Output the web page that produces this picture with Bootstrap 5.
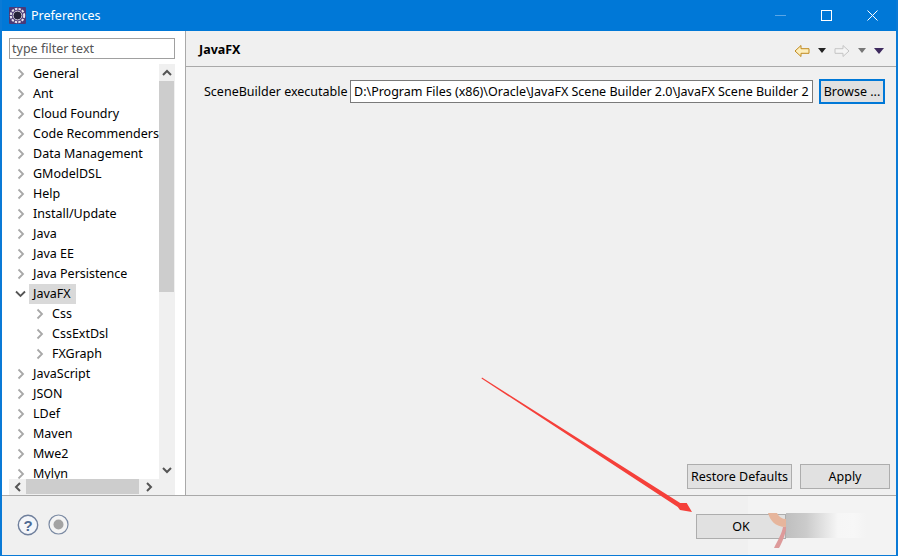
<!DOCTYPE html>
<html lang="en"><head><meta charset="utf-8"><title>Preferences</title>
<link rel="stylesheet" href="https://cdn.jsdelivr.net/npm/bootstrap@5.3.0/dist/css/bootstrap.min.css">
<style>
html,body{height:100%;overflow:hidden}
body{font-family:"Noto Sans","Liberation Sans",sans-serif;font-size:12.5px;color:#000;background:#fff}
.winframe{width:898px;height:556px;border:solid #0a7ad6;border-width:0 2px 1px 2px;position:relative;overflow:hidden;background:#f0f0f0}
.titlebar{height:31px;background:#0078d7;color:#fff;flex:none;margin:0 -2px}
.titlebar .ttl{font-size:12.5px;margin-left:5px;padding-top:1px}
.appicon{margin-left:9px}
.winctl{margin-right:3px}
.winbtn{width:46px;height:31px}
.sidepane{width:184px;flex:none;background:#fff;border-right:1px solid #a9a9a9;padding:7px 10px 0 7px;height:464px}
.filterbox{height:21px;border:1px solid #a0a0a0;border-radius:0;padding:0 2px;font-size:12.5px;color:#555;line-height:19px;flex:none;margin-bottom:5px;background:#fff}
.treewrap{height:415px;flex:none}
.treelist{overflow:hidden;margin:0;padding:0;list-style:none;background:#fff;height:415px}
.treeitem{height:20px;line-height:19px;white-space:nowrap;display:flex;align-items:center;flex:none}
.treeitem svg{width:8px;height:12px;margin:0 8px 0 8px;flex:none}
.treeitem.lvl2{padding-left:19px}
.treeitem span{padding:0 3px;margin-left:-3px;line-height:20px}
.treeitem.picked span{background:#d9d9d9;padding:0 5px 0 4px;margin-left:-4px}
.vbar{width:16px;background:#f0f0f0;flex:none}
.vbar .thumb{height:211px;background:#cdcdcd;width:15px}
.barbtn{height:17px;flex:none}
.hbar{height:16px;background:#f0f0f0;width:166px}
.hbar .thumb{width:113px;height:15px;background:#cdcdcd}
.hcap{width:17px;flex:none}
.hcap2{width:20px;flex:none}
.mainpane{background:#f0f0f0;height:464px;padding:0 0 0 13px}
.panehead{height:36px;border-bottom:1px solid #a9a9a9;margin:0 0 0 -13px;padding:4px 12px 0 13px;flex:none}
.panehead b{font-weight:700;font-size:12.5px}
.fieldrow{margin-top:12px;padding-left:5px}
.fieldlabel{width:146px;flex:none;white-space:nowrap;padding-top:2px}
.pathbox{width:463px;height:23px;border:1px solid #7a7a7a;border-radius:0;padding:0 3px;font-size:12.5px;line-height:21px;flex:none;overflow:hidden;white-space:nowrap;background:#fff;color:#000}
.swtbtn{background:#e1e1e1;border:1px solid #adadad;border-radius:0;color:#000;font-size:12.5px;padding:0;height:25px;line-height:22px;box-shadow:none}
.swtbtn.browse{width:66px;height:25px;border:2px solid #0078d7;margin-left:6px;line-height:20px}
.swtbtn.restore{width:105px}
.swtbtn.apply{width:90px;margin-left:8px}
.actions{margin-right:6px;margin-bottom:6px}
.bottombar{height:60px;background:linear-gradient(90deg,#f0f0f0 746px,#f3f3f3 746px);border-top:1px solid #a9a9a9;flex:none;padding:0 0 2px 15px}
.bottombar .ok{width:90px;margin-left:auto;margin-right:110px;margin-top:4px}
.stopicon{margin-left:9px}
.smudge{position:absolute;left:784px;top:513px;width:80px;height:25px;background:linear-gradient(90deg,#bfbfbf 0%,#cbcbcb 25%,#f6f6f6 65%,#f7f7f7 85%,#f3f3f3 100%)}
.anno{position:absolute;left:-2px;top:0;width:898px;height:556px;pointer-events:none}
</style></head><body>
<div class="winframe d-flex flex-column">
 <div class="titlebar d-flex align-items-center">
  <svg class="appicon" width="17" height="17" viewBox="0 0 17 17"><rect width="17" height="17" rx="1" fill="#4a3a78"/><circle cx="8.5" cy="8.5" r="6.7" fill="none" stroke="#e8e4ec" stroke-width="2" stroke-dasharray="2.4 1.2"/><circle cx="8.5" cy="8.5" r="4.4" fill="#25233a" stroke="#d8d4e0"/></svg>
  <span class="ttl">Preferences</span>
  <div class="ms-auto d-flex winctl">
   <div class="winbtn d-flex align-items-center justify-content-center"><svg width="11" height="11"><path d="M0 5.5h11" stroke="#5aa6e6"/></svg></div>
   <div class="winbtn d-flex align-items-center justify-content-center"><svg width="11" height="11"><rect x=".5" y=".5" width="10" height="10" fill="none" stroke="#fff"/></svg></div>
   <div class="winbtn d-flex align-items-center justify-content-center"><svg width="11" height="11"><path d="M.5.5l10 10M10.5.5l-10 10" stroke="#fff"/></svg></div>
  </div>
 </div>
 <div class="d-flex flex-grow-1" style="min-height:0">
  <div class="sidepane d-flex flex-column">
   <div class="filterbox">type filter text</div>
   <div class="treewrap d-flex">
    <ul class="treelist flex-grow-1">
     <li class="treeitem"><svg viewBox="0 0 8 12"><path d="M1.5 1.5L6 6l-4.500 4.500" fill="none" stroke="#a8a8a8" stroke-width="1.800"/></svg><span>General</span></li>
     <li class="treeitem"><svg viewBox="0 0 8 12"><path d="M1.5 1.5L6 6l-4.500 4.500" fill="none" stroke="#a8a8a8" stroke-width="1.800"/></svg><span>Ant</span></li>
     <li class="treeitem"><svg viewBox="0 0 8 12"><path d="M1.5 1.5L6 6l-4.500 4.500" fill="none" stroke="#a8a8a8" stroke-width="1.800"/></svg><span>Cloud Foundry</span></li>
     <li class="treeitem"><svg viewBox="0 0 8 12"><path d="M1.5 1.5L6 6l-4.500 4.500" fill="none" stroke="#a8a8a8" stroke-width="1.800"/></svg><span>Code Recommenders</span></li>
     <li class="treeitem"><svg viewBox="0 0 8 12"><path d="M1.5 1.5L6 6l-4.500 4.500" fill="none" stroke="#a8a8a8" stroke-width="1.800"/></svg><span>Data Management</span></li>
     <li class="treeitem"><svg viewBox="0 0 8 12"><path d="M1.5 1.5L6 6l-4.500 4.500" fill="none" stroke="#a8a8a8" stroke-width="1.800"/></svg><span>GModelDSL</span></li>
     <li class="treeitem"><svg viewBox="0 0 8 12"><path d="M1.5 1.5L6 6l-4.500 4.500" fill="none" stroke="#a8a8a8" stroke-width="1.800"/></svg><span>Help</span></li>
     <li class="treeitem"><svg viewBox="0 0 8 12"><path d="M1.5 1.5L6 6l-4.500 4.500" fill="none" stroke="#a8a8a8" stroke-width="1.800"/></svg><span>Install/Update</span></li>
     <li class="treeitem"><svg viewBox="0 0 8 12"><path d="M1.5 1.5L6 6l-4.500 4.500" fill="none" stroke="#a8a8a8" stroke-width="1.800"/></svg><span>Java</span></li>
     <li class="treeitem"><svg viewBox="0 0 8 12"><path d="M1.5 1.5L6 6l-4.500 4.500" fill="none" stroke="#a8a8a8" stroke-width="1.800"/></svg><span>Java EE</span></li>
     <li class="treeitem"><svg viewBox="0 0 8 12"><path d="M1.5 1.5L6 6l-4.500 4.500" fill="none" stroke="#a8a8a8" stroke-width="1.800"/></svg><span>Java Persistence</span></li>
     <li class="treeitem picked"><svg viewBox="0 0 8 12" style="overflow:visible"><path d="M-1 3.500L3.500 8 8 3.500" fill="none" stroke="#555" stroke-width="1.800"/></svg><span>JavaFX</span></li>
     <li class="treeitem lvl2"><svg viewBox="0 0 8 12"><path d="M1.5 1.5L6 6l-4.500 4.500" fill="none" stroke="#a8a8a8" stroke-width="1.800"/></svg><span>Css</span></li>
     <li class="treeitem lvl2"><svg viewBox="0 0 8 12"><path d="M1.5 1.5L6 6l-4.500 4.500" fill="none" stroke="#a8a8a8" stroke-width="1.800"/></svg><span>CssExtDsl</span></li>
     <li class="treeitem lvl2"><svg viewBox="0 0 8 12"><path d="M1.5 1.5L6 6l-4.500 4.500" fill="none" stroke="#a8a8a8" stroke-width="1.800"/></svg><span>FXGraph</span></li>
     <li class="treeitem"><svg viewBox="0 0 8 12"><path d="M1.5 1.5L6 6l-4.500 4.500" fill="none" stroke="#a8a8a8" stroke-width="1.800"/></svg><span>JavaScript</span></li>
     <li class="treeitem"><svg viewBox="0 0 8 12"><path d="M1.5 1.5L6 6l-4.500 4.500" fill="none" stroke="#a8a8a8" stroke-width="1.800"/></svg><span>JSON</span></li>
     <li class="treeitem"><svg viewBox="0 0 8 12"><path d="M1.5 1.5L6 6l-4.500 4.500" fill="none" stroke="#a8a8a8" stroke-width="1.800"/></svg><span>LDef</span></li>
     <li class="treeitem"><svg viewBox="0 0 8 12"><path d="M1.5 1.5L6 6l-4.500 4.500" fill="none" stroke="#a8a8a8" stroke-width="1.800"/></svg><span>Maven</span></li>
     <li class="treeitem"><svg viewBox="0 0 8 12"><path d="M1.5 1.5L6 6l-4.500 4.500" fill="none" stroke="#a8a8a8" stroke-width="1.800"/></svg><span>Mwe2</span></li>
     <li class="treeitem"><svg viewBox="0 0 8 12"><path d="M1.5 1.5L6 6l-4.500 4.500" fill="none" stroke="#a8a8a8" stroke-width="1.800"/></svg><span>Mylyn</span></li>
    </ul>
    <div class="vbar d-flex flex-column">
     <div class="barbtn d-flex align-items-center justify-content-center"><svg width="10" height="7"><path d="M1 6l4-4 4 4" fill="none" stroke="#555" stroke-width="2"/></svg></div>
     <div class="thumb"></div>
     <div class="flex-grow-1"></div>
     <div class="barbtn d-flex align-items-center justify-content-center"><svg width="10" height="7"><path d="M1 1l4 4 4-4" fill="none" stroke="#555" stroke-width="2"/></svg></div>
    </div>
   </div>
   <div class="hbar d-flex">
    <div class="hcap d-flex align-items-center justify-content-center"><svg width="7" height="10"><path d="M6 1L2 5l4 4" fill="none" stroke="#555" stroke-width="2"/></svg></div>
    <div class="thumb"></div>
    <div class="hcap2 d-flex align-items-center justify-content-center"><svg width="7" height="10"><path d="M1 1l4 4-4 4" fill="none" stroke="#555" stroke-width="2"/></svg></div>
   </div>
  </div>
  <div class="mainpane flex-grow-1 d-flex flex-column">
   <div class="panehead d-flex align-items-center">
    <b>JavaFX</b>
    <div class="ms-auto d-flex align-items-center">
     <svg width="16" height="14" viewBox="0 0 16 14"><path d="M1 7L7 1.500v3.200h8v4.600H7v3.200z" fill="#fdeebc" stroke="#c08a1e"/></svg>
     <svg class="ms-2" width="8" height="5"><path d="M0 0h8L4 5z" fill="#222"/></svg>
     <svg class="ms-2" width="16" height="14" viewBox="0 0 16 14"><path d="M15 7L9 1.500v3.200H1v4.600h8v3.200z" fill="#f4f4f4" stroke="#c4c4c4"/></svg>
     <svg class="ms-2" width="8" height="5"><path d="M0 0h8L4 5z" fill="#777"/></svg>
     <svg class="ms-2" width="10" height="6"><path d="M0 0h10L5 6z" fill="#3e2a5e"/></svg>
    </div>
   </div>
   <div class="fieldrow d-flex align-items-center">
    <div class="fieldlabel">SceneBuilder executable</div>
    <div class="pathbox">D:\Program Files (x86)\Oracle\JavaFX Scene Builder 2.0\JavaFX Scene Builder 2</div>
    <button type="button" class="btn swtbtn browse">Browse ...</button>
   </div>
   <div class="actions mt-auto d-flex justify-content-end">
    <button type="button" class="btn swtbtn restore">Restore Defaults</button>
    <button type="button" class="btn swtbtn apply">Apply</button>
   </div>
  </div>
 </div>
 <div class="bottombar d-flex align-items-center">
  <svg width="22" height="22" viewBox="0 0 22 22"><circle cx="11" cy="11" r="9.700" fill="#f4f6fa" stroke="#6f7f9c" stroke-width="1.400"/><text x="11" y="16.500" text-anchor="middle" font-family="Liberation Sans" font-weight="700" font-size="15" fill="#4e6a94">?</text></svg>
  <svg class="stopicon" width="21" height="21" viewBox="0 0 21 21"><circle cx="10.500" cy="10.500" r="9.500" fill="#f4f4f4" stroke="#7b8aa3" stroke-width="1.200"/><circle cx="10.500" cy="10.500" r="5" fill="#a3a3a3"/></svg>
  <button type="button" class="btn swtbtn ok">OK</button>
 </div>
 <div class="smudge"></div>
 <svg class="anno" viewBox="0 0 898 556">
  <path d="M482 377.500L680.200 503.100 686.700 503 692 512 680 510 677.800 506.900 481.500 378.500z" fill="#f5403a"/>
  <path d="M768 513L777 513C779 517 782 519 786 519L786 527C775 527 770 520 768 513z" fill="#e6b59c"/>
  <path d="M786 527L786 530C784 538 781 545 779 548L774 548C778 540 782 533 783 527z" fill="#dd9a9a"/>
 </svg>
</div>
<script src="https://cdn.jsdelivr.net/npm/bootstrap@5.3.0/dist/js/bootstrap.bundle.min.js"></script>
</body></html>
